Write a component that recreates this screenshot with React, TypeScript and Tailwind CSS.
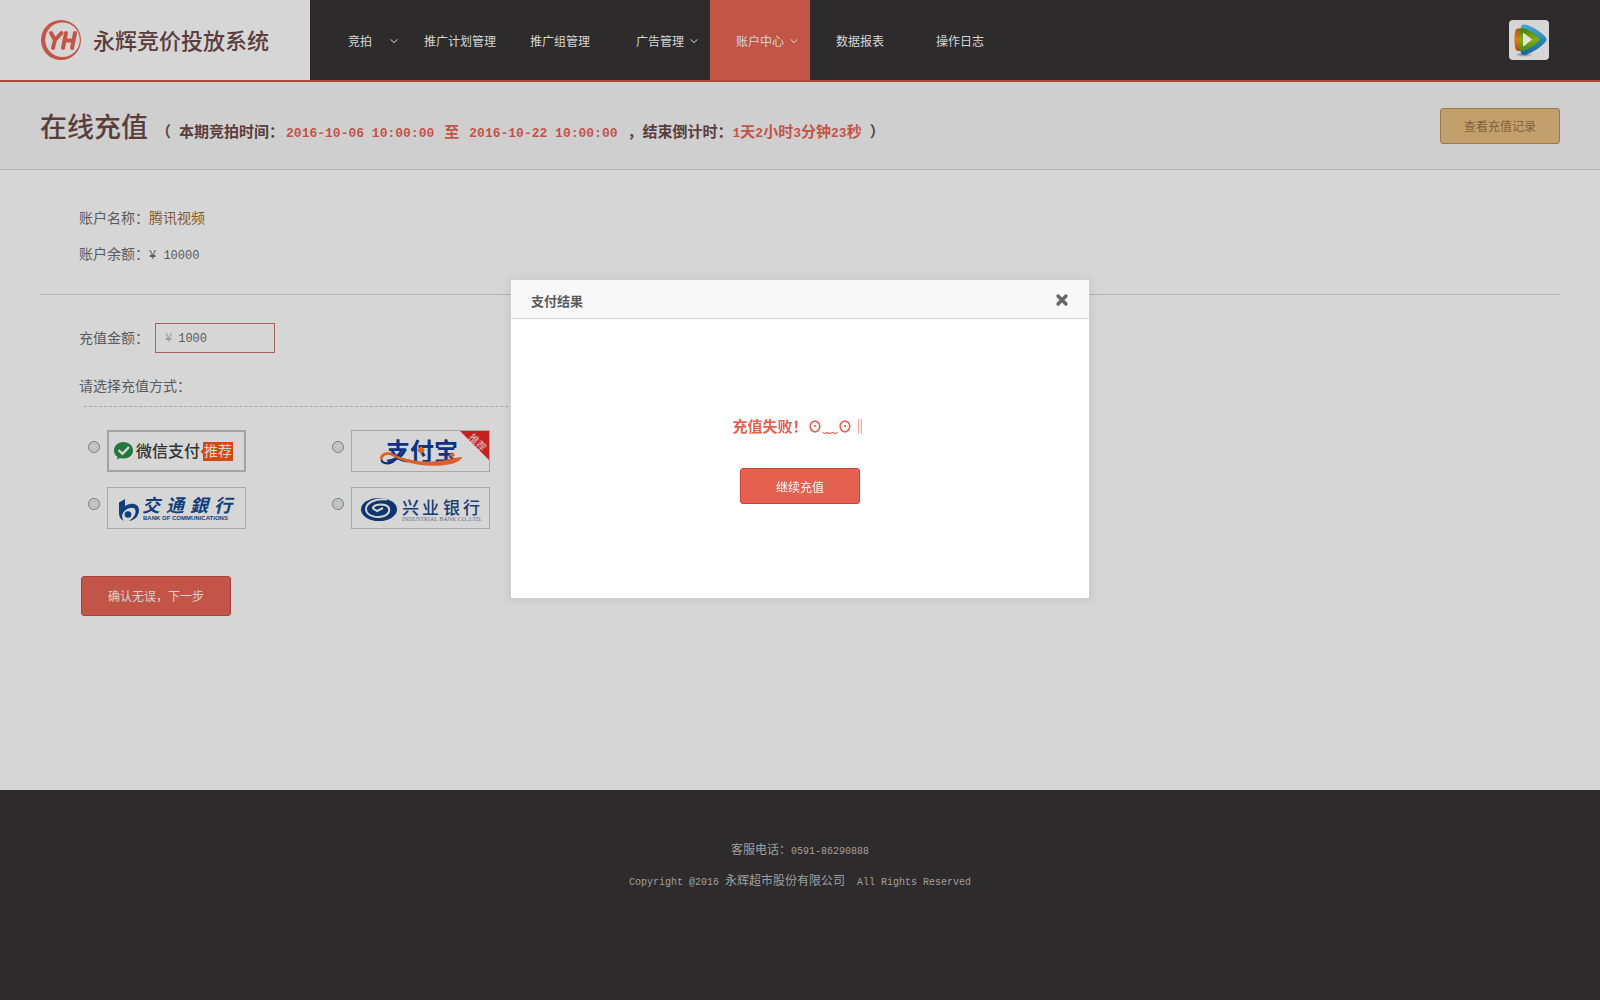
import React from "react";

const cjk = "font-['Noto_Sans_CJK_SC',sans-serif]";
const latin = "font-['Liberation_Mono','Noto_Sans_CJK_SC',monospace]";

function Chevron() {
  return (
    <svg className="h-1 w-2" viewBox="0 0 8 4" fill="none" stroke="currentColor" aria-hidden="true">
      <path d="M0.5 0.3 4 3.6 7.5 0.3" />
    </svg>
  );
}

function BrandMark() {
  return (
    <svg className="size-10" viewBox="0 0 40 40" aria-hidden="true">
      <path
        fill="#c35548"
        fillRule="evenodd"
        d="M20 0a20 20 0 1 0 0 40a20 20 0 1 0 0-40ZM21.500 2.500a17.300 17.300 0 1 1 0 34.600a17.300 17.300 0 1 1 0-34.600Z"
      />
      <g fill="none" stroke="#c35548" strokeWidth="4" strokeLinecap="round" strokeLinejoin="round">
        <path d="M10 13 14 20 20.500 13M14 20 12 28" />
        <path d="M25 13 22 28M34 13 31 28M24 20.500H32" />
      </g>
    </svg>
  );
}

function VideoLogo() {
  return (
    <svg className="size-10" viewBox="0 0 40 40" role="img" aria-label="腾讯视频">
      <defs>
        <linearGradient id="vblue" x1="0" y1="0" x2="0" y2="1">
          <stop offset="0" stopColor="#43aace" />
          <stop offset="1" stopColor="#15649b" />
        </linearGradient>
        <linearGradient id="vgreen" x1="0" y1="0" x2="0" y2="1">
          <stop offset="0" stopColor="#4d7c09" />
          <stop offset="0.5" stopColor="#7fae17" />
          <stop offset="1" stopColor="#4f8a0c" />
        </linearGradient>
        <linearGradient id="vorange" x1="0" y1="0" x2="0" y2="1">
          <stop offset="0" stopColor="#b4550d" />
          <stop offset="0.5" stopColor="#dd7a1b" />
          <stop offset="1" stopColor="#b04d0c" />
        </linearGradient>
        <radialGradient id="vshade">
          <stop offset="0" stopColor="#555" stopOpacity="0.8" />
          <stop offset="1" stopColor="#555" stopOpacity="0" />
        </radialGradient>
      </defs>
      <ellipse cx="15" cy="34.500" rx="9" ry="2.500" fill="url(#vshade)" />
      <path fill="url(#vorange)" d="M8.500 8.500Q5.500 8.500 5.500 19.500T8.500 31H12V8.500Z" />
      <path fill="url(#vblue)" d="M12 7Q12 4 16 4.500C23 6 31 11 36.500 17Q38.500 19.500 36.500 22C31 28 23 33 15.500 35Q12 35 11.500 31Z" />
      <path fill="url(#vgreen)" d="M10.500 9Q11 8 14 8.200C20 10 26 13.500 30 18Q31.500 19.500 30 21C25 26 20 29 13.500 31Q11 31 10.800 30Q9.500 20 10.500 9Z" />
      <path fill="#e3e5d9" d="M14 13.500Q14 12.500 15 13.200L22.500 19Q23 19.500 22.500 20L15 26Q14 26.500 14 25.500Z" />
    </svg>
  );
}

function WechatPay() {
  return (
    <svg className="h-[42px] w-[139px]" viewBox="0 0 139 42" role="img" aria-label="微信支付">
      <path fill="#24773f" d="M16.500 12C22 12 26 15.600 26 20.500S22 28.500 16.500 28.500Q14.500 28.500 13 28L10 29.500 10.500 26.700Q7 24.500 7 20.500C7 15.600 11 12 16.500 12Z" />
      <path fill="none" stroke="#d6d6d6" strokeWidth="2.400" d="M11.500 20 15.500 23.800 22 17" />
      <text x="29" y="27" fontSize="16" fontWeight="500" fill="#333">微信支付</text>
      <path fill="#d24a0f" d="M96 12H126V31H96V24L93.500 21.500 96 19Z" />
      <text x="97" y="26" fontSize="14" fill="#dcd6d2">推荐</text>
    </svg>
  );
}

function Alipay() {
  return (
    <svg className="h-[42px] w-[139px]" viewBox="0 0 139 42" role="img" aria-label="支付宝">
      <text x="35" y="30" fontSize="24" fontWeight="700" fill="#0e3285">支付宝</text>
      <path fill="none" stroke="#0e3285" strokeWidth="2.400" d="M30.500 29.500C31 34.500 40 34.500 43.500 30L51 20" />
      <path fill="#dd5f2a" d="M29 29C29 23 36 20 43 24C54 30 68 32 82 31.500C94 31 103 27.500 111.500 27C108 33 98 35.800 82 35.800C64 35.800 51 31 42 26.500C36 23.500 31.500 25.500 31 31Z" />
      <path fill="#dd5f2a" d="M70 16 74 20 70 24 66 20ZM101 22 104 25 101 28 98 25Z" />
      <path fill="#c8201f" d="M109 1H138V30Z" />
      <text x="0" y="0" fontSize="10" fill="#dcc6c6" transform="translate(117 8) rotate(45)">推荐</text>
    </svg>
  );
}

function BankComm() {
  return (
    <svg className="h-[42px] w-[139px]" viewBox="0 0 139 42" role="img" aria-label="交通银行">
      <path fill="#113f7c" d="M12 15.500 18 12V19C25 14.500 32 17 32 23C32 29 28 33 22 34C26 31 29 28 28.500 23.500C28 19.500 22 20 18 23.500C14.500 27 14.500 30 16.500 34C13 32 12 29 12 26Z" />
      <circle cx="21" cy="27.500" r="3.300" fill="#113f7c" />
      <text x="35 59 83 107" y="25" fontSize="18" fontWeight="700" fill="#113f7c" className="italic">交通銀行</text>
      <text x="36" y="33" fontSize="6" fontWeight="700" fill="#113f7c" className="font-['Liberation_Sans',sans-serif]">BANK OF COMMUNICATIONS</text>
    </svg>
  );
}

function IndustrialBank() {
  return (
    <svg className="h-[42px] w-[139px]" viewBox="0 0 139 42" role="img" aria-label="兴业银行">
      <ellipse cx="28" cy="22.500" rx="18" ry="11.500" fill="#0f356f" />
      <path
        fill="none"
        stroke="#d6d6d6"
        strokeWidth="2"
        d="M36 12.500C24 11 14.500 16 15 22.500C15.500 29 26 31.500 33 29C39.500 26.500 40 20 34 18C28 16.500 21.500 18.500 22 21.500L26 24 32 21"
      />
      <text x="51 71 92 112" y="27" fontSize="17" fontWeight="500" fill="#173c72">兴业银行</text>
      <text x="51" y="34" fontSize="6" fill="#5d7191" className="font-['Liberation_Serif',serif]">INDUSTRIAL BANK CO.,LTD.</text>
    </svg>
  );
}

const nav = [
  { label: "竞拍", menu: true },
  { label: "推广计划管理" },
  { label: "推广组管理" },
  { label: "广告管理", menu: true },
  { label: "账户中心", menu: true, active: true },
  { label: "数据报表" },
  { label: "操作日志" },
];

const countdown = [
  ["1", "天"],
  ["2", "小时"],
  ["3", "分钟"],
  ["23", "秒"],
];

const methods = [
  { id: "wechat", logo: <WechatPay />, strong: true },
  { id: "alipay", logo: <Alipay /> },
  { id: "bankcomm", logo: <BankComm /> },
  { id: "cib", logo: <IndustrialBank /> },
];

export default function App() {
  return (
    <div className={`flex min-h-screen flex-col bg-[#d6d6d6] text-sm text-[#5b5b5b] ${cjk}`}>
      <header className="flex h-[82px] border-b-2 border-[#ad4a3b] bg-[#2d2b2c]">
        <a href="#home" className="flex w-[310px] items-center gap-3 bg-[#d6d6d6] pl-[41px] text-[22px] font-medium text-[#5b3d3d]">
          <BrandMark />
          <span>永辉竞价投放系统</span>
        </a>
        <nav className="flex text-xs text-[#d6d6d6]">
          {nav.map((n) => (
            <a
              key={n.label}
              href="#nav"
              className={`grid w-[100px] grid-cols-[1fr_auto_1fr] items-center pt-0.5 ${n.active ? "bg-[#c35548]" : ""}`}
            >
              <span />
              <span className="whitespace-nowrap">{n.label}</span>
              {n.menu ? <span className="mr-3 justify-self-end"><Chevron /></span> : <span />}
            </a>
          ))}
        </nav>
        <a href="#profile" className="mr-[51px] ml-auto size-10 self-center rounded bg-[#d6d6d6]">
          <VideoLogo />
        </a>
      </header>

      <section className="flex h-[88px] items-center justify-between border-b border-[#b3b3b3] bg-[#cfcfcf] px-10">
        <div className="flex items-baseline text-[15px] leading-6 font-bold whitespace-pre text-[#5b3d3d]">
          <h1 className="mr-2 text-[27px] leading-10 font-medium">在线充值</h1>
          <p className="flex items-baseline pt-0.5">
            <span className="mr-2">（</span>
            <span>本期竞拍时间：</span>
            <span className="ml-0.5 flex items-baseline gap-2.5 text-[#c35548]">
              <span className={`text-[13px] ${latin}`}>2016-10-06 10:00:00</span>
              <span>至</span>
              <span className={`text-[13px] ${latin}`}>2016-10-22 10:00:00</span>
            </span>
            <span className="ml-2.5">，结束倒计时：</span>
            <span className="text-[#c35548]">
              {countdown.map(([n, unit]) => (
                <React.Fragment key={unit}>
                  <span className={`text-[13px] ${latin}`}>{n}</span>
                  {unit}
                </React.Fragment>
              ))}
            </span>
            <span className="ml-2">）</span>
          </p>
        </div>
        <button className="h-9 w-[120px] rounded-[3px] border border-[#9f7848] bg-[#c2a06e] text-xs text-[#84613a]">
          查看充值记录
        </button>
      </section>

      <main className="grow px-10">
        <dl className="flex flex-col gap-4 border-b border-[#b3b3b3] pt-[37px] pb-[31px] pl-[39px] leading-5">
          <div className="flex">
            <dt>账户名称：</dt>
            <dd className="text-[#84592f]">腾讯视频</dd>
          </div>
          <div className="flex h-5 items-baseline">
            <dt>账户余额：</dt>
            <dd className={`text-xs ${latin}`}>¥ 10000</dd>
          </div>
        </dl>
        <form className="pt-7 pl-[39px]" onSubmit={(e) => e.preventDefault()}>
          <div className="flex items-center gap-1.5">
            <label htmlFor="amount" className="pb-0.5">充值金额：</label>
            <div className={`flex h-[30px] w-[120px] items-center gap-1.5 border border-[#ab6060] px-[9px] pt-0.5 text-xs ${latin}`}>
              <span className="text-[#a0a0a0]">¥</span>
              <input id="amount" defaultValue="1000" className="w-full min-w-0 bg-transparent outline-none" />
            </div>
          </div>
          <fieldset>
            <legend className="pt-[22px] pb-px leading-5">请选择充值方式：</legend>
            <div className="mt-2.5 ml-[5px] w-[640px] border-t border-dashed border-[#a8a8a8]" />
            <div className="mt-[23px] ml-[9px] grid w-[488px] grid-cols-2 gap-y-[15px]">
              {methods.map((m) => (
                <label key={m.id} className="flex items-start gap-[7px]">
                  <input
                    type="radio"
                    name="method"
                    value={m.id}
                    className="mt-[11px] size-3 appearance-none rounded-full border border-[#7d7d7d] bg-radial from-[#cdd0d2] to-[#a9acae] shadow-[inset_0_0_0_1px_#d0d0d0]"
                  />
                  <span className={m.strong ? "outline-2 -outline-offset-2 outline-[#a3a3a3]" : "outline -outline-offset-1 outline-[#a8a8a8]"}>
                    {m.logo}
                  </span>
                </label>
              ))}
            </div>
          </fieldset>
          <button className="mt-[47px] ml-0.5 h-10 w-[150px] rounded-[3px] border border-[#ab4040] bg-[#c35548] text-xs text-[#d9d2d0]">
            确认无误，下一步
          </button>
        </form>
      </main>

      <footer className="flex h-[210px] flex-col items-center gap-2 bg-[#2d2b2c] pt-[49px] text-xs leading-5 whitespace-pre text-[#a0a0a0]">
        <p>客服电话：<span className={`text-[10px] ${latin}`}>0591-86290888</span></p>
        <p>
          <span className={`text-[10px] ${latin}`}>Copyright @2016 </span>
          永辉超市股份有限公司
          <span className={`text-[10px] ${latin}`}>{"  "}All Rights Reserved</span>
        </p>
      </footer>

      <div className="fixed inset-0 flex items-start justify-center pt-[279px]">
        <div
          role="dialog"
          aria-labelledby="result-title"
          className="w-[580px] rounded-xs border border-[#d2d2d2] bg-white shadow-[0_0_10px_rgba(0,0,0,0.1)]"
        >
          <div className="flex h-[39px] items-center justify-between border-b border-[#d6d6d6] bg-[#f8f8f8] px-5">
            <h2 id="result-title" className="pt-1 text-[13px] font-bold text-[#5b5b5b]">支付结果</h2>
            <button aria-label="关闭" className="pt-0.5 text-[#666]">
              <svg className="size-3.5" viewBox="0 0 14 14" stroke="currentColor" strokeWidth="3.400" strokeLinecap="round" aria-hidden="true">
                <path d="M3 3 11 11M11 3 3 11" />
              </svg>
            </button>
          </div>
          <div className="flex flex-col items-center pt-[97px] pb-[94px]">
            <p className="text-[15px] leading-5 font-bold text-[#e6604f]">充值失败！⊙﹏⊙‖</p>
            <button className="mt-8 h-9 w-[120px] rounded-[3px] border border-[#c9403f] bg-[#e6604f] pt-px text-xs text-white">
              继续充值
            </button>
          </div>
        </div>
      </div>
    </div>
  );
}
